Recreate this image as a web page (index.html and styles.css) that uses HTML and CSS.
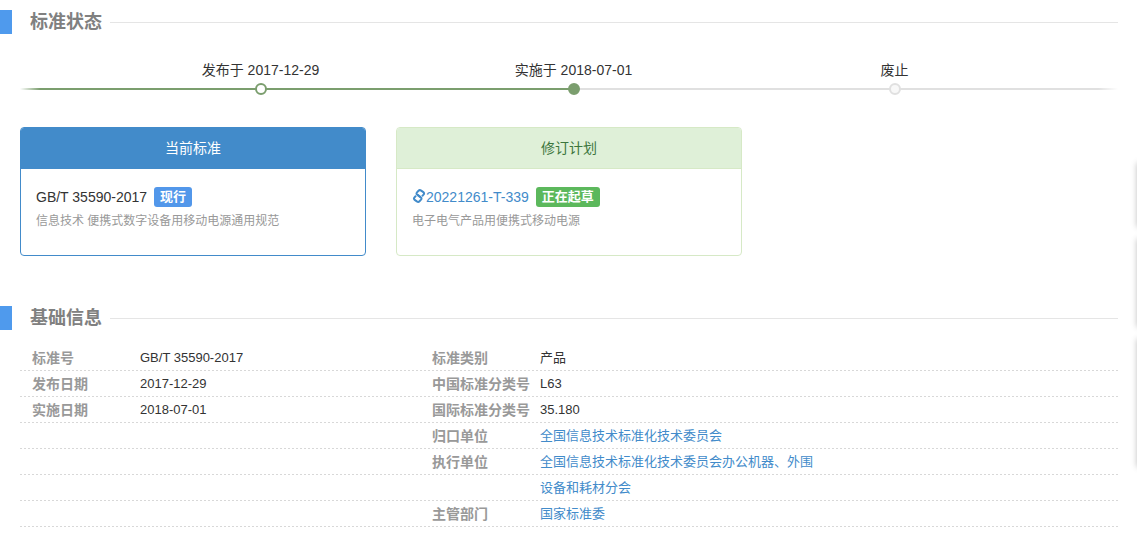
FILE: index.html
```
<!DOCTYPE html>
<html lang="zh-CN">
<head>
<meta charset="utf-8">
<title>GB/T 35590-2017</title>
<link rel="stylesheet" href="styles.css">
</head>
<body>
<main class="page">
  <section class="section">
    <h2 class="section-title"><span>标准状态</span></h2>
    <ol class="timeline">
      <li class="step">发布于 2017-12-29</li>
      <li class="step step-current">实施于 2018-07-01</li>
      <li class="step step-pending">废止</li>
    </ol>
    <div class="cards">
      <article class="card card-primary">
        <h3 class="card-head">当前标准</h3>
        <div class="card-body">
          <p class="code">GB/T 35590-2017 <span class="badge">现行</span></p>
          <p class="desc">信息技术 便携式数字设备用移动电源通用规范</p>
        </div>
      </article>
      <article class="card card-plan">
        <h3 class="card-head">修订计划</h3>
        <div class="card-body">
          <p class="code"><a href="#"><svg class="link-icon" viewBox="0 0 14 14" aria-hidden="true"><path d="M8.300 8.200 5 5.500C4.300 4.700 4.500 3.900 5 3.300L6.500 1.700C7.200 1 8.300 1 9.200 1.600L11.300 3.100C12.200 3.900 12.200 4.900 11.500 5.700L10 7.300"/><path d="M5.700 5.800 9 8.500C9.700 9.300 9.500 10.100 9 10.700L7.500 12.300C6.800 13 5.700 13 4.800 12.400L2.700 10.900C1.800 10.100 1.800 9.100 2.500 8.300L4 6.700"/></svg>20221261-T-339</a> <span class="badge badge-draft">正在起草</span></p>
          <p class="desc">电子电气产品用便携式移动电源</p>
        </div>
      </article>
    </div>
  </section>

  <section class="section">
    <h2 class="section-title"><span>基础信息</span></h2>
    <div class="info">
      <dl class="fields">
        <dt>标准号</dt><dd>GB/T 35590-2017</dd>
        <dt>发布日期</dt><dd>2017-12-29</dd>
        <dt>实施日期</dt><dd>2018-07-01</dd>
      </dl>
      <dl class="fields">
        <dt>标准类别</dt><dd>产品</dd>
        <dt>中国标准分类号</dt><dd>L63</dd>
        <dt>国际标准分类号</dt><dd>35.180</dd>
        <dt>归口单位</dt><dd><a href="#">全国信息技术标准化技术委员会</a></dd>
        <dt>执行单位</dt><dd><a href="#">全国信息技术标准化技术委员会办公机器、外围设备和耗材分会</a></dd>
        <dt>主管部门</dt><dd><a href="#">国家标准委</a></dd>
      </dl>
    </div>
  </section>
</main>
<aside class="dock">
  <div class="dock-panel"></div>
  <div class="dock-panel dock-medium"></div>
  <div class="dock-panel dock-tall"></div>
</aside>
</body>
</html>
```
FILE: styles.css
```
*, *::before, *::after { box-sizing: border-box; }
body {
  margin: 0;
  background: #fff;
  color: #333;
  font: 14px/20px "Liberation Sans", "Noto Sans CJK SC", sans-serif;
}
h2, h3, p, ol, dl, dd { margin: 0; padding: 0; }
a { color: #428bca; text-decoration: none; }

.page { padding: 10px 19px 16px 0; }
.section + .section { margin-top: 50px; }
.section-title {
  display: flex;
  align-items: center;
  gap: 8px;
  padding-left: 18px;
  border-left: 12px solid #4f9aed;
  color: #808080;
  font-size: 18px;
  line-height: 24px;
}
.section-title::after {
  content: "";
  flex: 1;
  height: 1px;
  background: #e5e5e5;
}

.timeline {
  display: grid;
  grid-template-columns: 313fr 313fr 329fr;
  margin: 26px 0 0 20px;
  padding: 0 59px 0 84px;
  list-style: none;
  background:
    linear-gradient(to right, #fff, transparent 20px, transparent calc(100% - 20px), #fff) no-repeat 0 28px / 100% 2px,
    linear-gradient(to right, #7b9e6e 50%, #e0e0e0 50%) no-repeat 0 28px / 100% 2px;
}
.step {
  display: flex;
  flex-direction: column;
  align-items: center;
  gap: 3px;
}
.step::after {
  content: "";
  width: 12px;
  height: 12px;
  border: 2px solid #7b9e6e;
  border-radius: 50%;
  background: #fff;
}
.step-current::after { background: #7b9e6e; }
.step-pending::after { border-color: #e0e0e0; background: #f8f8f8; }

.cards {
  display: grid;
  grid-template-columns: repeat(3, 1fr);
  gap: 30px;
  margin: 32px 0 0 20px;
}
.card {
  border: 1px solid #428bca;
  border-radius: 4px;
  overflow: hidden;
}
.card-head {
  padding: 10px 15px;
  border-bottom: 1px solid #428bca;
  background: #428bca;
  color: #fff;
  font-size: 14px;
  font-weight: 400;
  line-height: 20px;
  text-align: center;
}
.card-plan { border-color: #d6e9c6; }
.card-plan .card-head {
  border-color: #d6e9c6;
  background: #dff0d8;
  color: #3c763d;
}
.card-body { padding: 16px 15px 22px; }
.code {
  display: flex;
  align-items: center;
  gap: 7px;
  line-height: 24px;
}
.badge {
  padding: 0 6px;
  border-radius: 3px;
  background: #5297ea;
  color: #fff;
  font-size: 13px;
  font-weight: 700;
  line-height: 20px;
}
.badge-draft { background: #5cb85c; }
.desc {
  color: #999;
  font-size: 12px;
  line-height: 24px;
}
.link-icon {
  width: 14px;
  height: 14px;
  vertical-align: -1px;
  fill: none;
  stroke: currentColor;
  stroke-width: 2;
}

.info {
  display: grid;
  grid-template-columns: 400fr 400fr 298fr;
  margin: 15px 0 0 20px;
  background:
    repeating-linear-gradient(to right, transparent 0 2px, #fff 2px 4px),
    repeating-linear-gradient(to bottom, #fff 0 25px, #d8d8d8 25px 26px);
}
.fields {
  display: grid;
  grid-template-columns: 108px 1fr;
  align-content: start;
  padding-left: 12px;
  font-size: 13px;
  line-height: 26px;
}
.fields dt {
  color: #999;
  font-size: 14px;
  font-weight: 700;
}

.dock {
  position: fixed;
  top: 163px;
  left: 100%;
  display: grid;
  gap: 12px;
}
.dock-panel {
  width: 40px;
  height: 64px;
  background: #fff;
  box-shadow: 0 0 6px rgba(0, 0, 0, .25);
}
.dock-medium { height: 88px; }
.dock-tall { height: 128px; }
```
